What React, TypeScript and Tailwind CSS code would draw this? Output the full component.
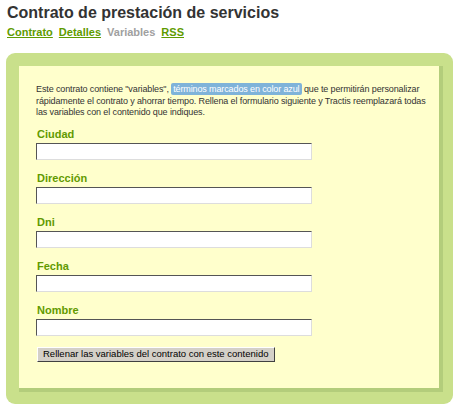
import React from "react";

const fields = ["Ciudad", "Dirección", "Dni", "Fecha", "Nombre"];

export default function App() {
  return (
    <div className="w-[460px] h-[410px] bg-white font-['Liberation_Sans',Arial,sans-serif] text-[#333] overflow-hidden">
      <div className="pl-[7px] pt-[3px]">
        <h1 className="text-[16px] leading-[20px] font-bold text-[#333]">Contrato de prestación de servicios</h1>
        <div className="flex gap-[6px] text-[11px] leading-[14px] font-bold mt-[2px]">
          <a className="text-[#5f9b00] underline">Contrato</a>
          <a className="text-[#5f9b00] underline">Detalles</a>
          <span className="text-[#a0a0a0]">Variables</span>
          <a className="text-[#5f9b00] underline">RSS</a>
        </div>
      </div>
      <div className="ml-[6px] mt-[14px] w-[447px] h-[351px] rounded-[9px] bg-[#c9e08b] pt-[13px] pl-[13px]">
        <div className="w-[424px] h-[326px] bg-[#ffffcc] border-r-4 border-b-4 border-[#b3cd7b] pl-[17px] pt-[18px]">
          <p className="text-[9px] leading-[11.5px] tracking-[-0.12px] text-[#333] w-[390px]">
            Este contrato contiene "variables",{" "}
            <span className="bg-[#7fb3d9] text-white rounded-[2px] px-[2px] py-[1px]">términos marcados en color azul</span>{" "}
            que te permitirán personalizar rápidamente el contrato y ahorrar tiempo. Rellena el formulario siguiente y Tractis reemplazará todas las variables con el contenido que indiques.
          </p>
          <div className="flex flex-col gap-[12px] mt-[9px]">
            {fields.map((f) => (
              <div key={f} className="flex flex-col">
                <label className="text-[11px] leading-[13px] font-bold text-[#629a00] pl-[1px]">{f}</label>
                <input
                  type="text"
                  className="mt-[2px] w-[276px] h-[17px] bg-white border border-t-[#555] border-l-[#555] border-b-[#ddd] border-r-[#ddd] outline-none"
                />
              </div>
            ))}
          </div>
          <button className="mt-[11px] ml-[1px] h-[15px] px-[5px] bg-[#d4d0c8] border border-t-white border-l-white border-b-[#404040] border-r-[#404040] text-[9.5px] leading-[12px] text-black">
            Rellenar las variables del contrato con este contenido
          </button>
        </div>
      </div>
    </div>
  );
}
